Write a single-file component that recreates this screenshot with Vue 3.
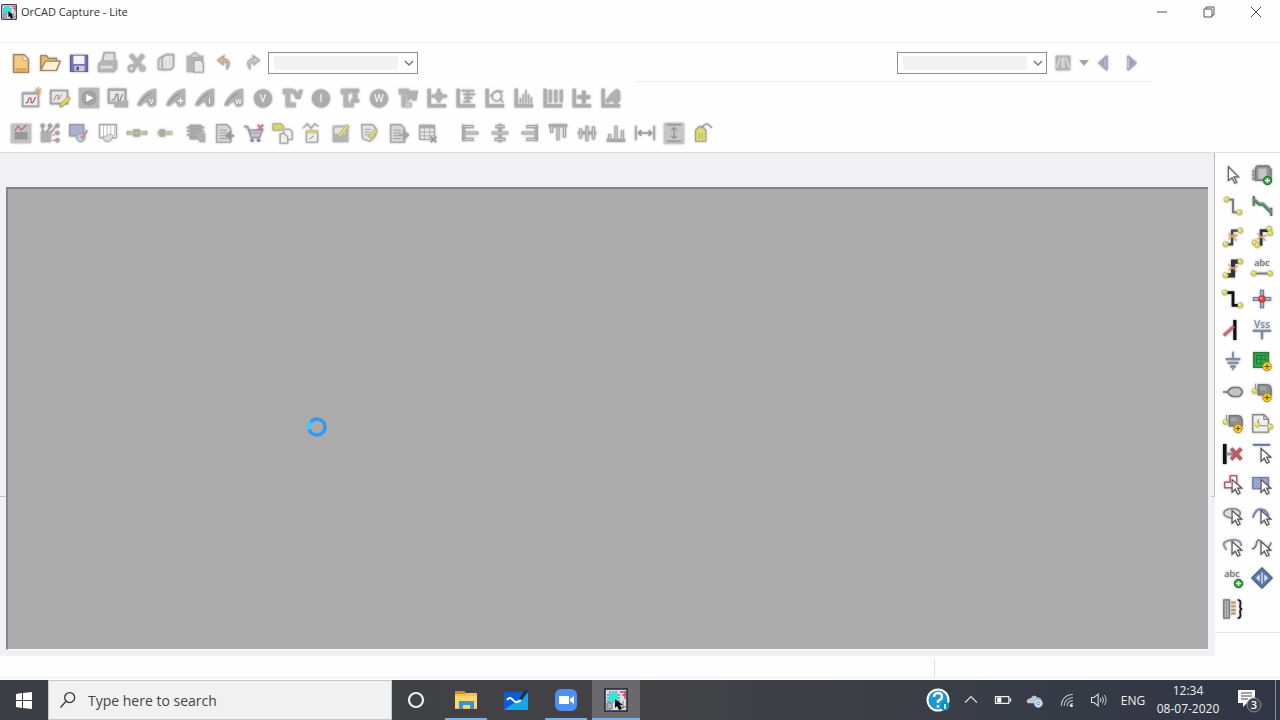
<script setup>
import { ref } from 'vue'

const partName = ref('')
const searchPart = ref('')
const query = ref('')

// Shared icon pieces, everything is drawn on a 24x24 grid
const arrow = '<path d="M11 6v14l3.5-3.5 2.8 5.5 2.4-1.2-2.7-5.3h4.6z" fill="#fff" stroke="#555" stroke-width="1.3"/>'
const plusGreen = '<circle cx="18" cy="18" r="4.6" fill="#2f9e3a" stroke="#19752a"/><path d="M18 15.3v5.4M15.3 18h5.4" stroke="#fff" stroke-width="1.6"/>'
const plusYellow = '<circle cx="17.5" cy="18" r="4.6" fill="#f6cf1e" stroke="#b98a00"/><path d="M17.5 15.2v5.6M14.7 18h5.6" stroke="#705000" stroke-width="1.2"/>'
const dot = (x, y) => `<circle cx="${x}" cy="${y}" r="2.8" fill="#dedb3a" stroke="#aeb08a" stroke-width=".7"/><circle cx="${x - 1}" cy="${y - 1}" r="1" fill="#fbfad0"/>`
const axis = '<path d="M3.5 2v18.5H22" fill="none" stroke="#adadad" stroke-width="3.6"/>'
const probe = '<path d="M1 20q3-8 9-13 6-5 12-5v17q-3 4-8 2l-2-5-4 2-3 3z" fill="#b3b3b3"/><path d="M3 19l7-8 6-4" fill="none" stroke="#999" stroke-width="1.5"/><circle cx="17" cy="15" r="5" fill="#adadad"/>'
const letter = (t, x, y, s = 11, c = '#f4f4f4') => `<text x="${x}" y="${y}" font-size="${s}" font-weight="600" font-family="Open Sans, sans-serif" text-anchor="middle" fill="${c}">${t}</text>`
const disc = (t) => `<circle cx="12" cy="12.5" r="10" fill="#adadad"/>${letter(t, 12, 16.5)}`
const tee = '<path d="M2 2h11v5h-3v10h6v5H5V8H2z" fill="#b3b3b3"/>'
const page = '<path d="M3 3h11l4 4v15H3z" fill="#d6d6d6" stroke="#a8a8a8" stroke-width="1.5"/><path d="M6 9h8M6 12h8M6 15h8M6 18h8" stroke="#999"/>'
const wave = '<path d="M5 14h3l2-6h2v7h2l3-7" fill="none" stroke="#888" stroke-width="1.3"/>'
const screen = '<path d="M2 4h18v14H2z" fill="#e6e6e6" stroke="#a3a3a3" stroke-width="2"/>'
const pinBlock = (plus) => `<path d="M2 10h7" stroke="#888" stroke-width="2"/><path d="M8 4h9q5 0 5 6v5H8z" fill="#8f8f8f" stroke="#777" stroke-width="1.5"/><path d="M10 7h6M10 9h6" stroke="#bbb"/><path d="M5 3v8" stroke="#888"/>${dot(4, 11)}${plus}`

const icons = {
  new: '<path d="M4 3h11l5 5v14H4z" fill="#f5cb83" stroke="#a58a63" stroke-width="1.6"/><path d="M14 3v6h6" fill="#fff1cf" stroke="#c79750"/><path d="M6 19h12" stroke="#e5a64c" stroke-width="3"/>',
  open: '<path d="M2 20V4h6l2 3h9v4" fill="#eeb76a" stroke="#a18460" stroke-width="1.5"/><path d="M2 20l5-10h16l-4 10z" fill="#fff3df" stroke="#ae8656" stroke-width="1.5"/>',
  save: '<path d="M3 4h18v17H3z" fill="#7778bb" stroke="#65668f" stroke-width="1.8"/><path d="M6 4h12v9H6z" fill="#f4f4fb"/><path d="M7 15h11v6H7z" fill="#c9cbdf"/><path d="M9 16h3v4H9z" fill="#555985"/>',
  print: '<path d="M6 10l2-9h11v9" fill="#e1e1e1" stroke="#b0b0b0" stroke-width="2"/><path d="M1 13l4-4h17v9l-3 4H1z" fill="#b5b5b5"/><path d="M4 15h13v3H4z" fill="#ddd"/>',
  cut: '<path d="M5 3l12 14M19 3L8 17" stroke="#b4b4b4" stroke-width="5"/><circle cx="6" cy="18" r="3" fill="#ddd" stroke="#b1b1b1" stroke-width="2.5"/><circle cx="18" cy="18" r="3.5" fill="#b8b8b8"/>',
  copy: '<path d="M4 8l4-3h4v14H4z" fill="#ddd" stroke="#b5b5b5" stroke-width="2"/><path d="M8 6l4-3h8v13l-3 3H8z" fill="#e8e8e8" stroke="#aeaeae" stroke-width="2"/><path d="M12 8v8M16 6v10" stroke="#ccc"/>',
  paste: '<path d="M3 4h18v18H3z" fill="#b5b5b5"/><path d="M8 6q0-5 4-5t4 5z" fill="#d0d0d0" stroke="#aaa"/><path d="M11 9h7l3 3v10H11z" fill="#e8e8e8" stroke="#aaa" stroke-width="1.5"/>',
  undo: '<path d="M12 4L5 9l6 5v-3q6-1 4 8 7-10-4-12z" fill="#e2b48e" stroke="#aaa" stroke-width="1.2"/>',
  redo: '<path d="M12 4l7 5-6 5v-3q-6-1-4 8-7-10 4-12z" fill="#ccc" stroke="#aaa" stroke-width="1.2"/>',
  find: '<path d="M4 4h16v16H4z" fill="#b5b5b5"/><path d="M9 6l-4 11M11 6v11M13 6v11M15 6l4 11" stroke="#e5e5e5" stroke-width="1.3"/>',
  prev: '<path d="M16 5v14l-8-7z" fill="#9a9ac8" stroke="#a6a8b5" stroke-width="2.5" stroke-linejoin="round"/><path d="M14.5 8v8" stroke="#b7b8da" stroke-width="2"/>',
  next: '<path d="M9 5v14l8-7z" fill="#9a9ac8" stroke="#a6a8b5" stroke-width="2.5" stroke-linejoin="round"/><path d="M9 7v10" stroke="#c8c9df" stroke-width="2"/>',
  newSim: '<path d="M3 7h17v14H3z" fill="#eee" stroke="#a8a8a8" stroke-width="2"/><path d="M3 7h17" stroke="#aab" stroke-width="3"/><path d="M6 17h2l2-5h2v5h2l3-6" fill="none" stroke="#b35a6b" stroke-width="1.3"/><path d="M20 0v9M15.5 4.500h8M17 1l6 7M23 1l-6 7" stroke="#d3a85b"/>',
  editSim: `${screen}<path d="M5 15l3-6h2v5l4-6" stroke="#a77" fill="none"/><path d="M12 22l1-4 8-8 2 3-8 8z" fill="#e9d94a" stroke="#a89e64"/>`,
  run: '<path d="M1 1h22v22H1z" fill="#b8b8b8"/><circle cx="12" cy="12" r="8.5" fill="#a2a2a2"/><path d="M9 8l8 4-8 4z" fill="#fff"/>',
  results: `<path d="M2 3h18v14H2z" fill="#e6e6e6" stroke="#aaa" stroke-width="2.5"/>${wave}<path d="M8 17l4-2h11v7H8z" fill="#b0b0b0"/>`,
  probeV: probe + letter('v', 17, 18, 9),
  probePlus: `${probe}<path d="M17 12v6M14 15h6" stroke="#f4f4f4" stroke-width="1.5"/>`,
  probeI: probe + letter('I', 17, 18, 9),
  probeW: probe + letter('w', 17, 18, 9),
  discV: disc('V'),
  discI: disc('I'),
  discW: disc('W'),
  teeV: `${tee}<path d="M12 3h4l2 4 2-4h4l-3 10h-5z" fill="#b0b0b0"/>`,
  teeI: `${tee}<path d="M13 2h9v4h-2v7h2v4h-9v-4h2V6h-2z" fill="#b0b0b0"/>`,
  teeW: `${tee}<path d="M11 4h12l-2 11h-4l-2-3-2 3h-2z" fill="#b0b0b0"/><circle cx="12" cy="20" r="3" fill="#c9c9c9"/>`,
  axMove: `${axis}<path d="M14 2v15M6 10h17" stroke="#acacac" stroke-width="3"/><path d="M14 3l6 7-6 7-6-7z" fill="#b2b2b2"/>`,
  axLines: `${axis}<path d="M7 4h14M9 8h13M10 12h9M9 16h8M14 3v14" stroke="#acacac" stroke-width="2"/>`,
  axCircle: `${axis}<circle cx="14" cy="10" r="5" fill="#f7f7f7" stroke="#b2b2b2" stroke-width="2"/><path d="M7 10l7-6 7 1M17 12l4 5" fill="none" stroke="#b5a9a9" stroke-width="1.5"/>`,
  axBars: `${axis}<path d="M8 18v-6M11 18V8M14 18V3M17 18V8M20 18v-7" stroke="#b0b0b0" stroke-width="1.6"/>`,
  axCols: `${axis}<path d="M9 3v14M15 3v14M21 3v14" stroke="#b0b0b0" stroke-width="3.5"/>`,
  axPlus: `${axis}<path d="M14 4v14M7 11h14" stroke="#acacac" stroke-width="4"/>`,
  axProbe: `${axis}<path d="M6 15l6-8 6-5 4 3v10l-5 4-4-4-5 3z" fill="#b0b0b0"/>`,
  snap: '<path d="M1 2h22v21H1z" fill="#c2c2c2"/><path d="M5 11h14v8H5z" fill="#969696"/><path d="M5 10l4-6 3 5 6-6" fill="none" stroke="#b07b80" stroke-width="1.5"/>',
  area: '<path d="M2 10h11v12H2z" fill="#b0b0b0"/><circle cx="4" cy="4" r="2.5" fill="#a5a5a5"/><circle cx="12" cy="4" r="2.5" fill="#a5a5a5"/><circle cx="20" cy="4" r="2.5" fill="#a5a5a5"/><circle cx="20" cy="12" r="2.5" fill="#a5a5a5"/><circle cx="20" cy="20" r="2.5" fill="#a5a5a5"/><path d="M4 6v5M12 6l-4 5M18 5l-5 7" stroke="#ad9999" stroke-width="1.5"/><path d="M14 11l3-4M14 15l4-2M14 20h4" stroke="#d58e95"/>',
  config: '<path d="M2 3h15v12H2z" fill="#acb2cb" stroke="#9b9caa" stroke-width="1.5"/><circle cx="14" cy="17" r="4.5" fill="#c3cad8" stroke="#999"/><path d="M14 15l2 3 5-9" fill="none" stroke="#bf8e90" stroke-width="1.8"/>',
  grid: '<path d="M3 3h18v14H3z" fill="#fff" stroke="#aaa" stroke-width="1.5"/><path d="M7 3v12M11 3v12M15 3v12M19 3v12" stroke="#bbb"/><path d="M6 16l5-1 3-2 4 2-4 6H9z" fill="#ddd" stroke="#aaa"/>',
  netLong: '<path d="M1 12h22" stroke="#bbb" stroke-width="4"/><path d="M1 12h22" stroke="#d2d06c" stroke-width="1.5"/><path d="M8 8h7v8H8z" fill="#aaa"/><path d="M10 12h3" stroke="#d2d06c" stroke-width="2"/><path d="M2 10v4M22 10v4" stroke="#99a"/>',
  netShort: '<path d="M4 12h16" stroke="#bbb" stroke-width="4"/><path d="M5 12h14" stroke="#d2d06c" stroke-width="1.5"/><path d="M6 8h6v8H6z" fill="#aaa"/>',
  chip: '<path d="M5 3h13v16H5z" fill="#a5a5a5"/><path d="M2 6h19M2 10h19M2 14h17" stroke="#aaa" stroke-width="2"/><path d="M11 12h11v10h-6z" fill="#b2b2b2"/>',
  docIn: `${page}<path d="M22 15h-6M18 11l-5 4 5 4z" stroke="#999" stroke-width="2" fill="#999"/>`,
  cart: '<path d="M1 5h4l4 12h9l3-8H6" fill="#c8c8d0" stroke="#9999ab" stroke-width="1.7"/><path d="M7 12h12" stroke="#999"/><circle cx="10" cy="20" r="2" fill="#8d8db0"/><circle cx="17" cy="20" r="2" fill="#8d8db0"/><path d="M16 3l6 6M22 3l-6 6" stroke="#c18585" stroke-width="2"/>',
  tagCopy: '<path d="M1 2h9l3 3-3 4H1z" fill="#d9d56c" stroke="#aaa886"/><path d="M13 8h6l3 3v8h-9z" fill="#eee" stroke="#aaa" stroke-width="1.5"/><path d="M9 13h5l3 3v7H9z" fill="#eee" stroke="#aaa" stroke-width="1.5"/>',
  waveDoc: '<path d="M2 7l5-5 4 5 4-5 4 3" fill="none" stroke="#aaa" stroke-width="1.4"/><path d="M6 10h12v12H6z" fill="#eee" stroke="#aaa" stroke-width="1.5"/><path d="M6 11h12" stroke="#d4cf66" stroke-width="3"/><path d="M9 19l5-4" stroke="#888"/>',
  edit: '<path d="M3 4h17v18H3z" fill="#b3b3b3"/><path d="M5 6h12v7H5z" fill="#e1e1e1"/><path d="M8 15l10-12 3 2-9 11z" fill="#dfdb72" stroke="#b2af7d"/>',
  pageEdit: '<path d="M3 3h12l4 5-1 7-6 6-8-3z" fill="#e3e3e3" stroke="#aaa" stroke-width="1.4"/><path d="M6 8h7M6 11h6M6 14h5" stroke="#999"/><path d="M10 16l7-8 3 2-7 8z" fill="#dedb67" stroke="#a9a788"/>',
  docOut: `${page}<path d="M12 14h5M17 10l5 4-5 5z" stroke="#a5a5a5" stroke-width="2" fill="#a5a5a5"/>`,
  tableDel: '<path d="M3 4h16v15H3z" fill="#e6e6e6" stroke="#aaa" stroke-width="1.5"/><path d="M3 5h16" stroke="#aaa" stroke-width="4"/><path d="M3 11h16M3 15h16M8 7v12M14 7v12" stroke="#aaa"/><path d="M15 16l6 6M21 16l-6 6" stroke="#999" stroke-width="2"/>',
  left: '<path d="M4 3v18M4 5h11M4 12h16M4 19h11" stroke="#a8a8ab" stroke-width="3.5"/><path d="M5 12h14M5 5h9M5 19h9" stroke="#dadadd"/>',
  middle: '<path d="M12 2v20M7 5h10M3 12h18M6 19h12" stroke="#a8a8ab" stroke-width="3.5"/><path d="M4 12h16M8 5h8M7 19h10" stroke="#dadadd"/>',
  right: '<path d="M20 3v18M20 5H9M20 12H4M20 19H9" stroke="#a8a8ab" stroke-width="3.5"/><path d="M19 12H5M19 5h-9M19 19h-9" stroke="#dadadd"/>',
  top: '<path d="M2 4h20M5 4v8M12 4v16M19 4v13" stroke="#a8a8ab" stroke-width="3.5"/><path d="M5 5v6M12 5v14M19 5v11" stroke="#dadadd"/>',
  center: '<path d="M2 12h20M5 7v11M12 4v17M19 5v14" stroke="#a8a8ab" stroke-width="3.5"/><path d="M5 8v9M12 5v15M19 6v12" stroke="#dadadd"/>',
  bottom: '<path d="M2 20h20M5 20v-7M12 20V4M19 20V9" stroke="#a8a8ab" stroke-width="3.5"/><path d="M5 19v-5M12 19V5M19 19v-9" stroke="#dadadd"/>',
  spreadH: '<path d="M2 4v16M22 4v16" stroke="#aaa" stroke-width="2"/><path d="M5 12h14M8 9l-3 3 3 3M16 9l3 3-3 3" fill="none" stroke="#999" stroke-width="1.8"/>',
  spreadV: '<path d="M1 1h22v23H1z" fill="#c6c6c6"/><path d="M4 3h16M4 21h16" stroke="#9d9d9d" stroke-width="2"/><path d="M12 6v12M9 9l3-3 3 3M9 15l3 3 3-3" fill="none" stroke="#959595" stroke-width="1.5"/>',
  tag: '<path d="M4 9l4-4h3l4 4v12H4z" fill="#dfda72" stroke="#a5a37f" stroke-width="1.3"/><path d="M8 12v6M11 12v6" stroke="#b5ae4c"/><path d="M10 7q5-7 8-4t4 3" fill="none" stroke="#999" stroke-width="1.3"/>',
  pointer: '<path d="M7 3v15l4-3 3 6 2-1-3-6h5z" fill="#fff" stroke="#666" stroke-width="1.4"/>',
  part: `<path d="M3 6v12M1 8h5M1 12h5M1 16h5" stroke="#999" stroke-width="2"/><path d="M5 4l2-2h12l3 4v12H5z" fill="#8f9497" stroke="#777" stroke-width="1.3"/><path d="M8 5h9v11H8z" fill="#c0c5c8"/>${plusGreen}`,
  wire: `<path d="M6 5h6v14h6" fill="none" stroke="#777" stroke-width="2"/>${dot(5, 5)}${dot(19, 19)}`,
  autoWire: '<path d="M3 1v11M22 14v9" fill="none" stroke="#6c7878" stroke-width="2.5"/><path d="M3 5l6 5h4l9 9" fill="none" stroke="#7d8a87" stroke-width="3.5"/><path d="M3 6l6 5h4l9 9" fill="none" stroke="#359953" stroke-width="1.6"/>',
  wire2: `<path d="M5 20h6V5h8" fill="none" stroke="#444" stroke-width="2.5"/><path d="M8 8l8 8M7 14l10-4M7 10h9" stroke="#d7a469" stroke-width="1.3"/>${dot(20, 5)}${dot(4, 20)}`,
  wireMulti: `<path d="M5 20h6V5h8" fill="none" stroke="#333" stroke-width="3"/><path d="M7 8l9 8M7 14l10-4" stroke="#d7a469" stroke-width="1.3"/>${dot(20, 3)}${dot(21, 8)}${dot(4, 18)}${dot(7, 21)}`,
  wireBus: `<path d="M5 20h7V5h8" fill="none" stroke="#333" stroke-width="4.5"/><path d="M7 8l9 8M7 14l10-4" stroke="#d7a469" stroke-width="1.3"/>${dot(20, 5)}${dot(4, 20)}`,
  netAlias: `${letter('abc', 12, 10, 10, '#777')}<path d="M4 18h16" stroke="#777" stroke-width="2"/>${dot(3, 18)}${dot(21, 18)}`,
  bus: `<path d="M4 5h8v14h8" fill="none" stroke="#111" stroke-width="3"/>${dot(3, 5)}${dot(20, 19)}`,
  junction: '<path d="M12 2v20M2 12h20" stroke="#777d9c" stroke-width="4.500"/><path d="M12 3v18M3 12h18" stroke="#c2c5da" stroke-width="1.5"/><circle cx="12" cy="12" r="3.6" fill="#e3474b" stroke="#b03138"/><circle cx="11" cy="11" r="1.2" fill="#f8b8b8"/>',
  busEntry: '<path d="M14 1v22" stroke="#111" stroke-width="3.5"/><path d="M2 18L13 8" stroke="#c96b78" stroke-width="3.5"/>',
  power: `${letter('Vss', 12, 10, 11, '#858da8')}<path d="M2 13h20M12 13v9" stroke="#7f88a5" stroke-width="2.5"/>`,
  ground: '<path d="M12 2v8" stroke="#838ba9" stroke-width="2"/><path d="M4 10h16M6 14h12M9 18h6" stroke="#838ba9" stroke-width="2.5"/><path d="M12 19v3" stroke="#999" stroke-width="2"/>',
  block: `<path d="M3 3h16v16H3z" fill="#35a650" stroke="#2b7b3e" stroke-width="1.5"/><path d="M6 6h10v9H6zM6 10h10M11 6v8" fill="none" stroke="#1d7332"/>${plusYellow}`,
  port: '<path d="M1 12h5" stroke="#777" stroke-width="1.7"/><path d="M6 12q2-4 6-5h6q4 2 4 5t-4 5h-6q-4-1-6-5z" fill="#c3c3c3" stroke="#777" stroke-width="1.7"/>',
  pin: pinBlock(plusYellow),
  offPage: `<path d="M2 3h12l5 5v14H2z" fill="#eee" stroke="#888" stroke-width="1.5"/><path d="M14 3v5h5M8 8v7h11" fill="none" stroke="#888" stroke-width="1.3"/>${dot(7, 14)}${dot(21, 16)}`,
  noConnect: '<path d="M3 1v22" stroke="#111" stroke-width="4"/><path d="M5 12h8" stroke="#829ab3" stroke-width="3"/><path d="M10 6l11 12M21 6L10 18" stroke="#bf5a62" stroke-width="4"/>',
  line: `<path d="M2 2h19" stroke="#66719b" stroke-width="2"/>${arrow}`,
  poly: `<path d="M3 9h6V2h7v13H3z" fill="#fff" stroke="#c35b68" stroke-width="1.7"/>${arrow}`,
  rect: `<path d="M2 4h17v12H2z" fill="#9ba6d0" stroke="#747da4" stroke-width="1.5"/>${arrow}`,
  ellipse: `<ellipse cx="11" cy="9" rx="9" ry="5" fill="#ddd" stroke="#888" stroke-width="1.7"/>${arrow}`,
  arc: `<path d="M2 14Q5 3 12 5q5 1 7 7" fill="none" stroke="#7883ae" stroke-width="2.2"/>${arrow}`,
  ellArc: `<path d="M5 15q-7-8 2-10 14-3 14 6" fill="none" stroke="#8a91ad" stroke-width="2"/>${arrow}`,
  bezier: `<path d="M1 14q4 0 5-6t5-2 5 6q3 3 6-5" fill="none" stroke="#777" stroke-width="1.7"/>${arrow}`,
  text: `${letter('abc', 11, 11, 10, '#777')}${plusGreen}`,
  ieee: '<path d="M12 1l11 11-11 11L1 12z" fill="#607ba9" stroke="#4c6489" stroke-width="1.5"/><path d="M12 6v12" stroke="#dce4f3" stroke-width="1.5"/><path d="M9 9v6l-3-3zM15 9v6l3-3z" fill="#dce4f3" stroke="#dce4f3"/>',
  pinArray: '<path d="M2 2h6v20H2z" fill="#b9b9b9" stroke="#777" stroke-width="1.5"/><path d="M5 3v18" stroke="#888"/><path d="M10 5h5M10 9h5M10 13h5M10 17h5" stroke="#bd9865" stroke-width="2.2"/><path d="M17 2q4 0 3 5t2 5q-3 0-2 5t-3 5" fill="none" stroke="#222" stroke-width="2"/>',
  orcad: '<path d="M1 1h22v22H1z" fill="#dcdce4" stroke="#202636" stroke-width="1.5"/><path d="M3 15h5v6H3zM19 13v8M16 19h6" fill="#aeb1c7" stroke="#777"/><path d="M16 4h6M18 7h4M21 3v8" stroke="#c94b64" stroke-width="1.5"/><path d="M3 7h13M3 10h13M3 13h13M6 3v12M9 3v12M12 3v12" stroke="#177b80"/><path d="M5 5h9v9H5z" fill="#2be8e0"/><path d="M11 11l8 6h-3l2 4-3 1-2-4-2 2z" fill="#050505"/>',
  start: '<path d="M4 6l6-1v7H4zM11 5l9-1v8h-9zM4 13h6v7l-6-1zM11 13h9v8l-9-1z" fill="#fff"/>',
  search: '<circle cx="14" cy="9" r="6" fill="none" stroke="#333" stroke-width="1.5"/><path d="M10 13l-7 8" stroke="#333" stroke-width="1.5"/>',
  cortana: '<circle cx="12" cy="12" r="7" fill="none" stroke="#eee" stroke-width="2.2"/>',
  explorer: '<path d="M1 3h9l2 2h11v16H1z" fill="#f3c04b"/><path d="M1 3h9l2 3H1z" fill="#cf911f"/><path d="M1 8h22v12H1z" fill="#ffd66c"/><path d="M5 21v-8h15v8h-4v-4H9v4z" fill="#3b93d2"/>',
  whiteboard: '<path d="M0 4h24v18H0z" fill="#0b5ed0"/><path d="M0 22L24 5v17z" fill="#16a5e8"/><path d="M3 12q3-4 6 0t8 0" fill="none" stroke="#fff" stroke-width="2"/><path d="M15 11l6-9 3 1-6 9z" fill="#252c3c"/>',
  zoom: '<rect x="1" y="1" width="22" height="22" rx="6" fill="#4c8ff5"/><path d="M5 8h10v8H5zM16 11l4-3v8l-4-3z" fill="#fff"/>',
  help: '<circle cx="12" cy="12" r="10.5" fill="#1a98d0" stroke="#fff" stroke-width="2"/><path d="M8 9q0-4 4-4t4 4q0 2-4 4v2" fill="none" stroke="#fff" stroke-width="2.4"/><circle cx="12" cy="18.5" r="1.4" fill="#fff"/><circle cx="19" cy="18" r="4.5" fill="#168abc"/><path d="M19 16v5" stroke="#fff" stroke-width="1.5"/>',
  up: '<path d="M5 15l7-7 7 7" fill="none" stroke="#ddd" stroke-width="1.5"/>',
  battery: '<path d="M3 8h16v8H3zM21 10v4" fill="none" stroke="#eee" stroke-width="1.5"/><path d="M5 9h5v6H5z" fill="#fff"/>',
  cloud: '<path d="M3 16q-3-5 4-6 3-6 8-1 5 0 5 5l-2 2z" fill="#c3c7cd"/><circle cx="16" cy="16" r="5" fill="#dce9f6" stroke="#7ca4ca"/><circle cx="16" cy="16" r="2" fill="none" stroke="#3c86c8"/>',
  wifi: '<path d="M5 19Q6 6 19 5M8.500 19q1-9 10.500-10M12 19q1-6 7-6.500M15.500 19.500q1-3 3.500-3.500" fill="none" stroke="#c9c9d0" stroke-width="1.3"/><circle cx="17.500" cy="19" r="1.5" fill="#fff"/>',
  volume: '<path d="M3 9h3l5-4v14l-5-4H3z" fill="none" stroke="#ddd" stroke-width="1.3"/><path d="M13.500 9.500q2 2.500 0 5M16 8q3 4 0 8M18.500 6q4 6 0 12" fill="none" stroke="#ccc" stroke-width="1.2"/>',
  notif: '<path d="M0 2h17v13H9l-4 4v-4H0z" fill="#fff"/><path d="M3 5h11M3 8h11M3 11h7" stroke="#444954" stroke-width="1.2"/><circle cx="16" cy="17" r="7" fill="#41444e" stroke="#8b8d94"/>' + letter('3', 16, 21, 11, '#fff')
}

const fileTools = ['new', 'open', 'save', 'print', 'cut', 'copy', 'paste', 'undo', 'redo']
const simTools = ['newSim', 'editSim', 'run', 'results', 'probeV', 'probePlus', 'probeI', 'probeW', 'discV', 'teeV', 'discI', 'teeI', 'discW', 'teeW', 'axMove', 'axLines', 'axCircle', 'axBars', 'axCols', 'axPlus', 'axProbe']
const editTools = [
  ['snap', 'area', 'config', 'grid', 'netLong', 'netShort'],
  ['chip', 'docIn', 'cart', 'tagCopy', 'waveDoc', 'edit', 'pageEdit', 'docOut', 'tableDel'],
  ['left', 'middle', 'right', 'top', 'center', 'bottom', 'spreadH', 'spreadV', 'tag']
]
const drawTools = ['pointer', 'part', 'wire', 'autoWire', 'wire2', 'wireMulti', 'wireBus', 'netAlias', 'bus', 'junction', 'busEntry', 'power', 'ground', 'block', 'port', 'pin', 'pin', 'offPage', 'noConnect', 'line', 'poly', 'rect', 'ellipse', 'arc', 'ellArc', 'bezier', 'text', 'ieee', 'pinArray']
const apps = [
  { icon: 'cortana', state: '' },
  { icon: 'explorer', state: 'open' },
  { icon: 'whiteboard', state: '' },
  { icon: 'zoom', state: 'open' },
  { icon: 'orcad', state: 'open active' }
]
const trayIcons = ['up', 'battery', 'cloud', 'wifi', 'volume']
</script>

<template>
  <div class="window">
    <header class="titlebar">
      <svg class="app-icon" viewBox="0 0 24 24" v-html="icons.orcad"></svg>
      <span class="title">OrCAD Capture - Lite</span>
      <div class="controls">
        <button aria-label="Minimize"><svg viewBox="0 0 12 12"><path d="M1 6h10" /></svg></button>
        <button aria-label="Restore"><svg viewBox="0 0 12 12"><path d="M1 3h8v8H1zM3 3V1h8v8H9" /></svg></button>
        <button aria-label="Close"><svg viewBox="0 0 12 12"><path d="M1 1l10 10M11 1L1 11" /></svg></button>
      </div>
    </header>
    <div class="menubar"></div>

    <div class="toolbars">
      <div class="toolbar main">
        <div class="group">
          <button v-for="name in fileTools" :key="name" class="tool" :aria-label="name">
            <svg viewBox="0 0 24 24" v-html="icons[name]"></svg>
          </button>
        </div>
        <label class="combo">
          <select v-model="partName" aria-label="Part"><option value=""></option></select>
          <svg viewBox="0 0 10 10"><path d="M1 3l4 4 4-4" /></svg>
        </label>
        <div class="finder">
          <label class="combo">
            <select v-model="searchPart" aria-label="Find"><option value=""></option></select>
            <svg viewBox="0 0 10 10"><path d="M1 3l4 4 4-4" /></svg>
          </label>
          <button class="tool" aria-label="find"><svg viewBox="0 0 24 24" v-html="icons.find"></svg></button>
          <button class="drop" aria-label="find options"><svg viewBox="0 0 10 10"><path d="M0 2h10L5 8z" /></svg></button>
          <button class="tool" aria-label="previous"><svg viewBox="0 0 24 24" v-html="icons.prev"></svg></button>
          <button class="tool" aria-label="next"><svg viewBox="0 0 24 24" v-html="icons.next"></svg></button>
        </div>
      </div>
      <div class="toolbar sim">
        <button v-for="name in simTools" :key="name" class="tool" :aria-label="name">
          <svg viewBox="0 0 24 24" v-html="icons[name]"></svg>
        </button>
      </div>
      <div class="toolbar edit">
        <div v-for="(group, i) in editTools" :key="i" class="group">
          <button v-for="name in group" :key="name" class="tool" :class="{ slim: name === 'netShort' }" :aria-label="name">
            <svg viewBox="0 0 24 24" v-html="icons[name]"></svg>
          </button>
        </div>
      </div>
    </div>

    <main class="workspace">
      <div class="gutter"></div>
      <section class="canvas">
        <svg class="spinner" viewBox="0 0 20 20">
          <circle cx="10" cy="10" r="8" fill="none" stroke="#3597ee" stroke-width="3.5" />
          <path d="M2.500 12.500Q1 8.500 4 5" fill="none" stroke="#2fd2fb" stroke-width="3.5" />
        </svg>
      </section>
      <div class="gutter right"></div>
      <aside class="palette">
        <div class="palette-grid">
          <button v-for="(name, i) in drawTools" :key="i" class="tool" :aria-label="name">
            <svg viewBox="0 0 24 24" v-html="icons[name]"></svg>
          </button>
        </div>
      </aside>
    </main>

    <div class="statusbar"><div class="status-main"></div><div class="status-side"></div></div>

    <footer class="taskbar">
      <button class="start" aria-label="Start"><svg viewBox="0 0 24 24" v-html="icons.start"></svg></button>
      <label class="search">
        <svg viewBox="0 0 24 24" v-html="icons.search"></svg>
        <input v-model="query" type="text" placeholder="Type here to search">
      </label>
      <div class="apps">
        <button v-for="app in apps" :key="app.icon" :class="app.state" :aria-label="app.icon">
          <svg viewBox="0 0 24 24" v-html="icons[app.icon]"></svg>
        </button>
      </div>
      <div class="tray">
        <button class="help" aria-label="Help"><svg viewBox="0 0 24 24" v-html="icons.help"></svg></button>
        <button v-for="name in trayIcons" :key="name" :aria-label="name">
          <svg viewBox="0 0 24 24" v-html="icons[name]"></svg>
        </button>
        <span class="lang">ENG</span>
        <div class="clock"><span>12:34</span><span>08-07-2020</span></div>
        <button class="notif" aria-label="Notifications"><svg viewBox="0 0 24 24" v-html="icons.notif"></svg></button>
        <button class="desktop" aria-label="Show desktop"></button>
      </div>
    </footer>
  </div>
</template>

<style>
body { margin: 0; background: #fff; }
</style>

<style scoped>
.window {
  min-height: 100vh; display: flex; flex-direction: column;
  background: #fefefe; color: #333;
  font-family: "Segoe UI", "Open Sans", "Noto Sans", sans-serif; font-size: 12px;
}
button { border: none; background: none; padding: 0; margin: 0; font: inherit; color: inherit; display: grid; place-items: center; }
svg { display: block; overflow: visible; }

.titlebar { height: 24px; display: flex; align-items: center; }
.app-icon { width: 16px; height: 16px; margin: 0 4px 0 1px; }
.title { font-size: 11px; line-height: 16px; }
.controls { margin-left: auto; display: flex; padding-right: 1px; }
.controls button { width: 47px; height: 22px; }
.controls svg { width: 12px; height: 12px; fill: none; stroke: #555; stroke-width: 1; }
.menubar { height: 18px; border-bottom: 1px solid #f3f1f4; }

/* Toolbars */
.toolbars { padding: 2px 0; border-bottom: 1px solid #dddce0; }
.toolbar { height: 35px; display: flex; align-items: center; padding-left: 9px; }
.toolbar.main { height: 36px; gap: 3px; }
.toolbar.sim { padding-left: 19px; height: 34px; gap: 5px; }
.group { display: flex; gap: 5px; }
.edit .group + .group { margin-left: 19px; }
.edit .group:nth-child(2) { margin-left: 12px; }
.tool { width: 24px; height: 24px; flex: none; }
.tool svg { width: 22px; height: 22px; filter: drop-shadow(0 0 1px #aaa); }
.tool.slim { width: 18px; }
.combo { display: grid; width: 150px; height: 22px; align-items: center; }
.combo select, .combo svg { grid-area: 1 / 1; }
.combo select {
  appearance: none; width: 100%; height: 22px; margin: 0; border: 1px solid #8d8c90; border-radius: 0;
  background: linear-gradient(#f2f2f2, #f2f2f2) 5px 3px / 124px 14px no-repeat #fff;
}
.combo svg { width: 10px; height: 10px; justify-self: end; margin-right: 4px; fill: none; stroke: #777; stroke-width: 1.5; pointer-events: none; }
.finder { height: 36px; margin-left: auto; margin-right: 127px; padding: 0 10px 0 261px; display: flex; align-items: center; gap: 4px; border-bottom: 1px solid #efedf0; }
.finder .drop { width: 8px; }
.finder .drop svg { width: 10px; height: 10px; fill: #a3a3a3; }

/* Work area */
.workspace { flex: 1; display: flex; background: #f1f0f3; }
.gutter { width: 6px; display: flex; flex-direction: column; }
.gutter::before { content: ""; flex: 344; border-bottom: 1px solid #c6c6ca; }
.gutter::after { content: ""; flex: 159; }
.gutter.right { width: 7px; }
.gutter.right::before { border-right: 1px solid #bbb; margin-left: 3px; }
.canvas { flex: 1; position: relative; margin: 34px 0 6px; background: #ababab; border-top: 2px solid #858589; border-left: 2px solid #858589; border-bottom: 1px solid #fff; }
.spinner { position: absolute; left: 299px; top: 228px; width: 20px; height: 20px; }
.palette { width: 65px; background: #fefefe; }
.palette-grid { display: grid; grid-template-columns: 24px 24px; grid-auto-rows: 31px; column-gap: 5px; align-items: center; padding: 6px 0 8px 6px; border-bottom: 1px solid #e5e5e7; }

.statusbar { height: 24px; display: flex; padding-bottom: 2px; box-sizing: border-box; background: #fefefe; }
.status-main { flex: 935; border-bottom: 1px solid #ececee; }
.status-side { flex: 345; border-left: 1px solid #dedee0; border-bottom: 1px solid #ececee; margin-top: 4px; }

/* Taskbar */
.taskbar { height: 40px; display: flex; background: linear-gradient(90deg, #3b3e44, #434346 50%, #303645); color: #f1f1f1; }
.start { width: 48px; }
.start svg { width: 24px; height: 24px; }
.search { flex: 0 1 344px; display: flex; align-items: center; gap: 10px; background: #f1f1f1; border: 1px solid #c9c9c9; box-sizing: border-box; padding-left: 9px; }
.search svg { width: 20px; height: 20px; flex: none; }
.search input { flex: 1; min-width: 0; border: none; outline: none; padding: 0; background: none; font-family: inherit; font-size: 14px; }
.search input::placeholder { color: #444; opacity: 1; }
.apps { display: flex; gap: 2px; }
.apps button { width: 48px; height: 40px; box-sizing: border-box; }
.apps svg { width: 24px; height: 24px; }
.apps .open { padding-top: 2px; border-bottom: 2px solid #76b4e8; }
.apps .open:not(.active) { width: 42px; margin: 0 3px; }
.apps .active { background: #6a6a6e; }
.tray { margin-left: auto; display: flex; align-items: center; }
.tray button { width: 32px; height: 40px; }
.tray svg { width: 20px; height: 20px; }
.tray .help { width: 34px; }
.tray .help svg { width: 24px; height: 24px; }
.lang { width: 36px; text-align: center; }
.clock { width: 74px; display: flex; flex-direction: column; align-items: center; line-height: 18px; }
.tray .notif { width: 50px; }
.notif svg { width: 24px; height: 24px; }
.tray .desktop { width: 5px; border-left: 1px solid #8b8e96; }
</style>
